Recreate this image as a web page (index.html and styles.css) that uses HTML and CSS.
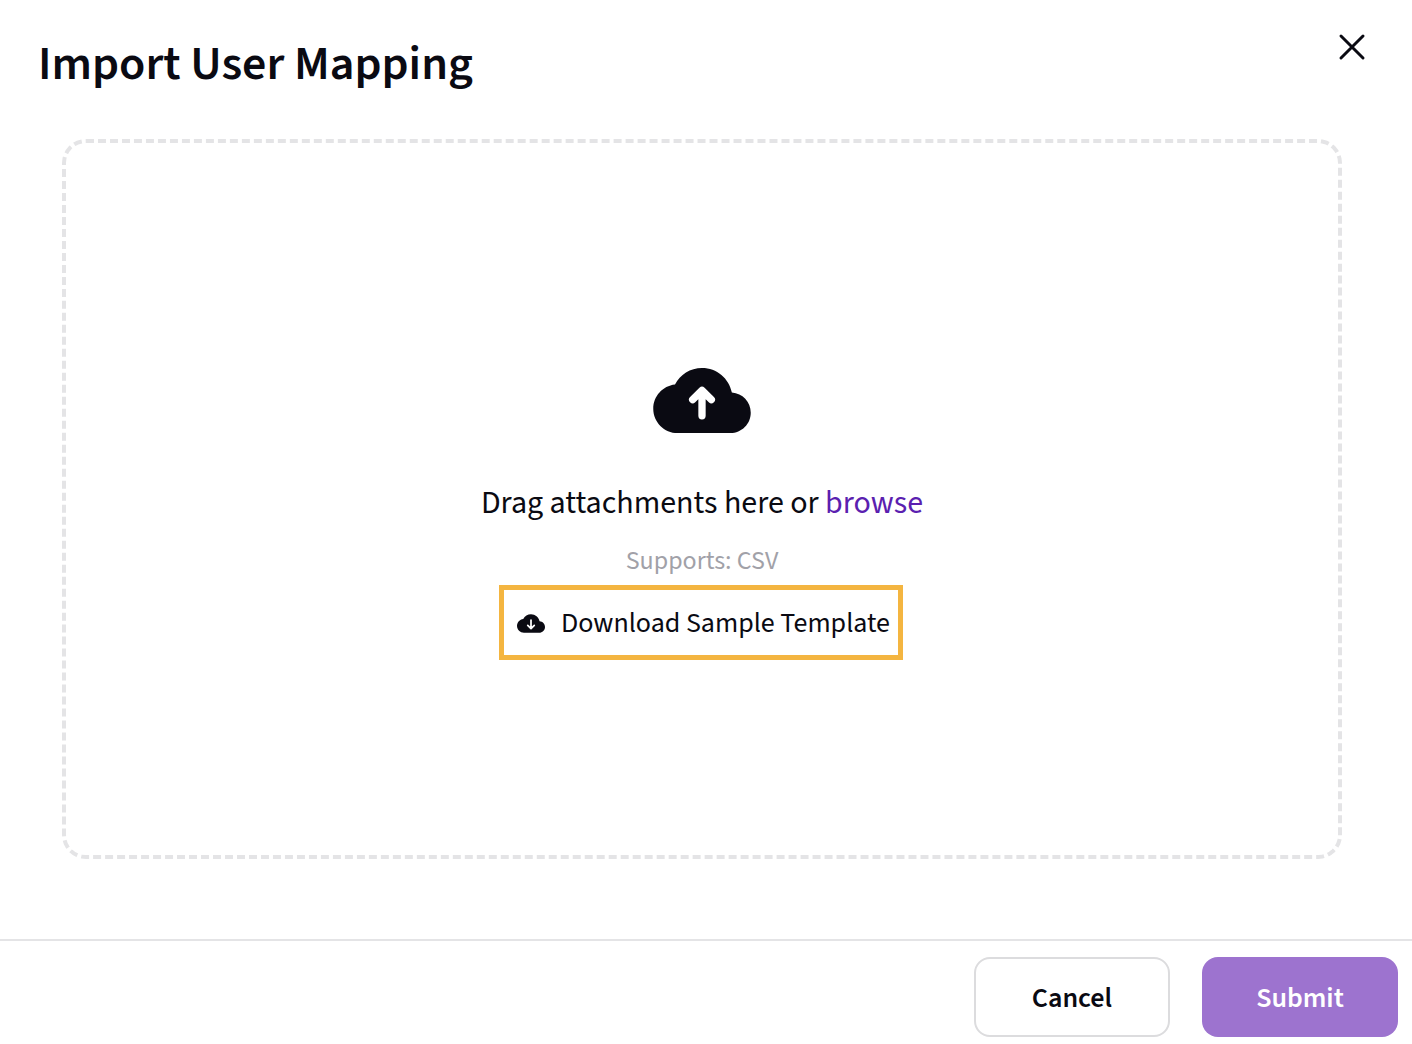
FILE: index.html
```html
<!DOCTYPE html>
<html lang="en">
<head>
  <meta charset="utf-8">
  <meta name="viewport" content="width=device-width, initial-scale=1">
  <title>Import User Mapping</title>
  <link rel="stylesheet" href="styles.css">
</head>
<body>
  <main class="dialog">
    <header class="dialog-header">
      <h1 class="dialog-title">Import User Mapping</h1>
      <button class="close-button" type="button" aria-label="Close">
        <svg class="close-icon" viewBox="0 0 24 24" aria-hidden="true">
          <path d="M1 1L23 23M23 1L1 23"/>
        </svg>
      </button>
    </header>

    <section class="dropzone">
      <svg class="upload-icon" viewBox="0 4 24 16" aria-hidden="true">
        <path class="cloud" d="M19.35 10.04C18.67 6.59 15.64 4 12 4 9.11 4 6.6 5.64 5.35 8.04 2.34 8.36 0 10.91 0 14c0 3.31 2.69 6 6 6h13c2.76 0 5-2.24 5-5 0-2.64-2.05-4.78-4.65-4.96z"/>
        <path class="arrow" d="M12 15.75V9.6M9.7 11.8L12 9.5l2.3 2.3"/>
      </svg>
      <p class="prompt">Drag attachments here or <a class="browse-link" href="#">browse</a></p>
      <p class="hint">Supports: CSV</p>
      <button class="template-button" type="button">
        <svg class="download-icon" viewBox="0 4 24 16" aria-hidden="true">
          <path class="cloud" d="M19.35 10.04C18.67 6.59 15.64 4 12 4 9.11 4 6.6 5.64 5.35 8.04 2.34 8.36 0 10.91 0 14c0 3.31 2.69 6 6 6h13c2.76 0 5-2.24 5-5 0-2.64-2.05-4.78-4.65-4.96z"/>
          <path class="arrow" d="M12 9V16M9.2 13.6L12 16.4l2.8-2.8"/>
        </svg>
        Download Sample Template
      </button>
    </section>

    <footer class="dialog-footer">
      <button class="button button-cancel" type="button">Cancel</button>
      <button class="button button-submit" type="submit">Submit</button>
    </footer>
  </main>
</body>
</html>
```
FILE: styles.css
```css
* {
  box-sizing: border-box;
}

body {
  margin: 0;
  background: #fff;
  color: #0a0a12;
  font-family: "Source Sans Pro", "Source Sans 3", "Noto Sans CJK SC", sans-serif;
}

button {
  margin: 0;
  padding: 0;
  border: 0;
  background: none;
  color: inherit;
  font: inherit;
  cursor: pointer;
}

.dialog {
  display: flex;
  flex-direction: column;
  min-height: 100vh;
}

.dialog-header {
  display: flex;
  align-items: flex-start;
  justify-content: space-between;
  padding: 31px 44px 42px 38px;
}

.dialog-title {
  margin: 0;
  font-size: 48px;
  font-weight: 600;
  line-height: 66px;
}

.close-button {
  display: flex;
  padding: 4px;
}

.close-icon {
  width: 24px;
  height: 24px;
  overflow: visible;
  fill: none;
  stroke: currentColor;
  stroke-width: 3;
  stroke-linecap: round;
}

.dropzone {
  display: flex;
  flex: 1;
  flex-direction: column;
  align-items: center;
  justify-content: center;
  margin: 0 70px 80px 62px;
  padding-top: 30px;
  border: 4px dashed #e4e4e6;
  border-radius: 24px;
}

.cloud {
  fill: currentColor;
}

.arrow {
  fill: none;
  stroke: #fff;
  stroke-linecap: round;
  stroke-linejoin: round;
}

.upload-icon {
  width: 98px;
  height: 65px;
  stroke-width: 1.8;
}

.prompt {
  margin: 50px 0 0;
  font-size: 32px;
  line-height: 40px;
}

.browse-link {
  color: #5b1fb0;
  text-decoration: none;
}

.hint {
  margin: 22px 0 8px;
  color: #a1a1a8;
  font-size: 26px;
  line-height: 32px;
}

.template-button {
  display: flex;
  align-items: center;
  gap: 16px;
  margin-right: 2px;
  padding: 15px 8px 13px 13px;
  border: 5px solid #f4b540;
  font-size: 28px;
  line-height: 37px;
}

.download-icon {
  width: 28px;
  height: 19px;
  stroke-width: 1.5;
}

.dialog-footer {
  display: flex;
  justify-content: flex-end;
  gap: 32px;
  padding: 16px 14px 7px;
  border-top: 2px solid #e4e4e6;
}

.button {
  width: 196px;
  height: 80px;
  padding-top: 2px;
  border-radius: 16px;
  font-size: 28px;
  font-weight: 600;
}

.button-cancel {
  border: 2px solid #dcdcde;
}

.button-submit {
  background: #9d73cf;
  color: #fff;
}
```
